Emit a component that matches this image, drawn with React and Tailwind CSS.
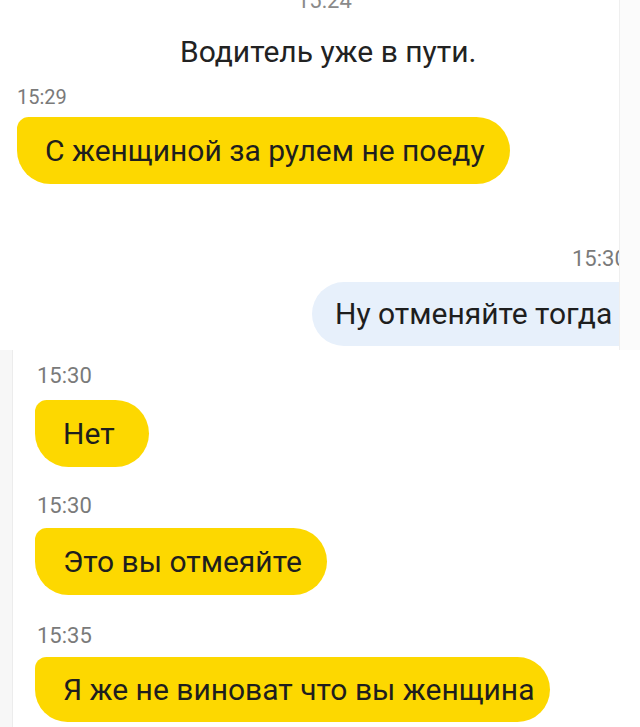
export default function App() {
  const yellow = "bg-[#fdd800]";
  return (
    <div className="w-[640px] h-[727px] overflow-hidden bg-white font-[Roboto,sans-serif] text-[#1e1e1e]">
      <div className="flex h-[350px]">
        <div className="w-[620px] h-[350px] overflow-hidden flex flex-col border-r border-[#efefef]">
          <p className="mt-[-10px] pl-[297px] text-[22px] leading-[22px] text-[#8a8a8a]">15:24</p>
          <p className="mt-[22px] pl-[180px] text-[30px] leading-[36px] text-[#222]">Водитель уже в пути.</p>
          <p className="mt-[15px] pl-[17px] text-[20px] leading-[24px] text-[#7a7a7a]">15:29</p>
          <div className={`mt-[8px] ml-[17px] self-start h-[67px] flex items-center pl-[28px] pr-[25px] rounded-[34px] rounded-tl-[12px] ${yellow}`}>
            <span className="text-[30px] leading-[36px] whitespace-nowrap">С женщиной за рулем не поеду</span>
          </div>
          <p className="mt-[62px] pl-[572px] text-[22px] leading-[26px] text-[#7a7a7a] whitespace-nowrap">15:30</p>
          <div className="mt-[10px] ml-[312px] self-start h-[64px] flex items-center pl-[23px] pr-[40px] rounded-[32px] bg-[#e7f0fb]">
            <span className="text-[30px] leading-[36px] whitespace-nowrap">Ну отменяйте тогда</span>
          </div>
        </div>
        <div className="flex-1 bg-[#fbfbfb]" />
      </div>
      <div className="flex h-[377px]">
        <div className="w-[13px] bg-[#f7f7f7] border-r border-[#ececec]" />
        <div className="flex-1 flex flex-col pl-[22px]">
          <p className="mt-[13px] pl-[2px] text-[22px] leading-[26px] text-[#7a7a7a]">15:30</p>
          <div className={`mt-[11px] self-start h-[67px] flex items-center pl-[28px] pr-[34px] rounded-[34px] rounded-tl-[12px] ${yellow}`}>
            <span className="text-[30px] leading-[36px] whitespace-nowrap">Нет</span>
          </div>
          <p className="mt-[26px] pl-[2px] text-[22px] leading-[26px] text-[#7a7a7a]">15:30</p>
          <div className={`mt-[9px] self-start h-[67px] flex items-center pl-[28px] pr-[25px] rounded-[34px] rounded-tl-[12px] ${yellow}`}>
            <span className="text-[30px] leading-[36px] whitespace-nowrap">Это вы отмеяйте</span>
          </div>
          <p className="mt-[28px] pl-[2px] text-[22px] leading-[26px] text-[#7a7a7a]">15:35</p>
          <div className={`mt-[8px] self-start h-[65px] flex items-center pl-[28px] pr-[16px] rounded-[34px] rounded-tl-[12px] ${yellow}`}>
            <span className="text-[30px] leading-[36px] whitespace-nowrap">Я же не виноват что вы женщина</span>
          </div>
        </div>
      </div>
    </div>
  );
}
